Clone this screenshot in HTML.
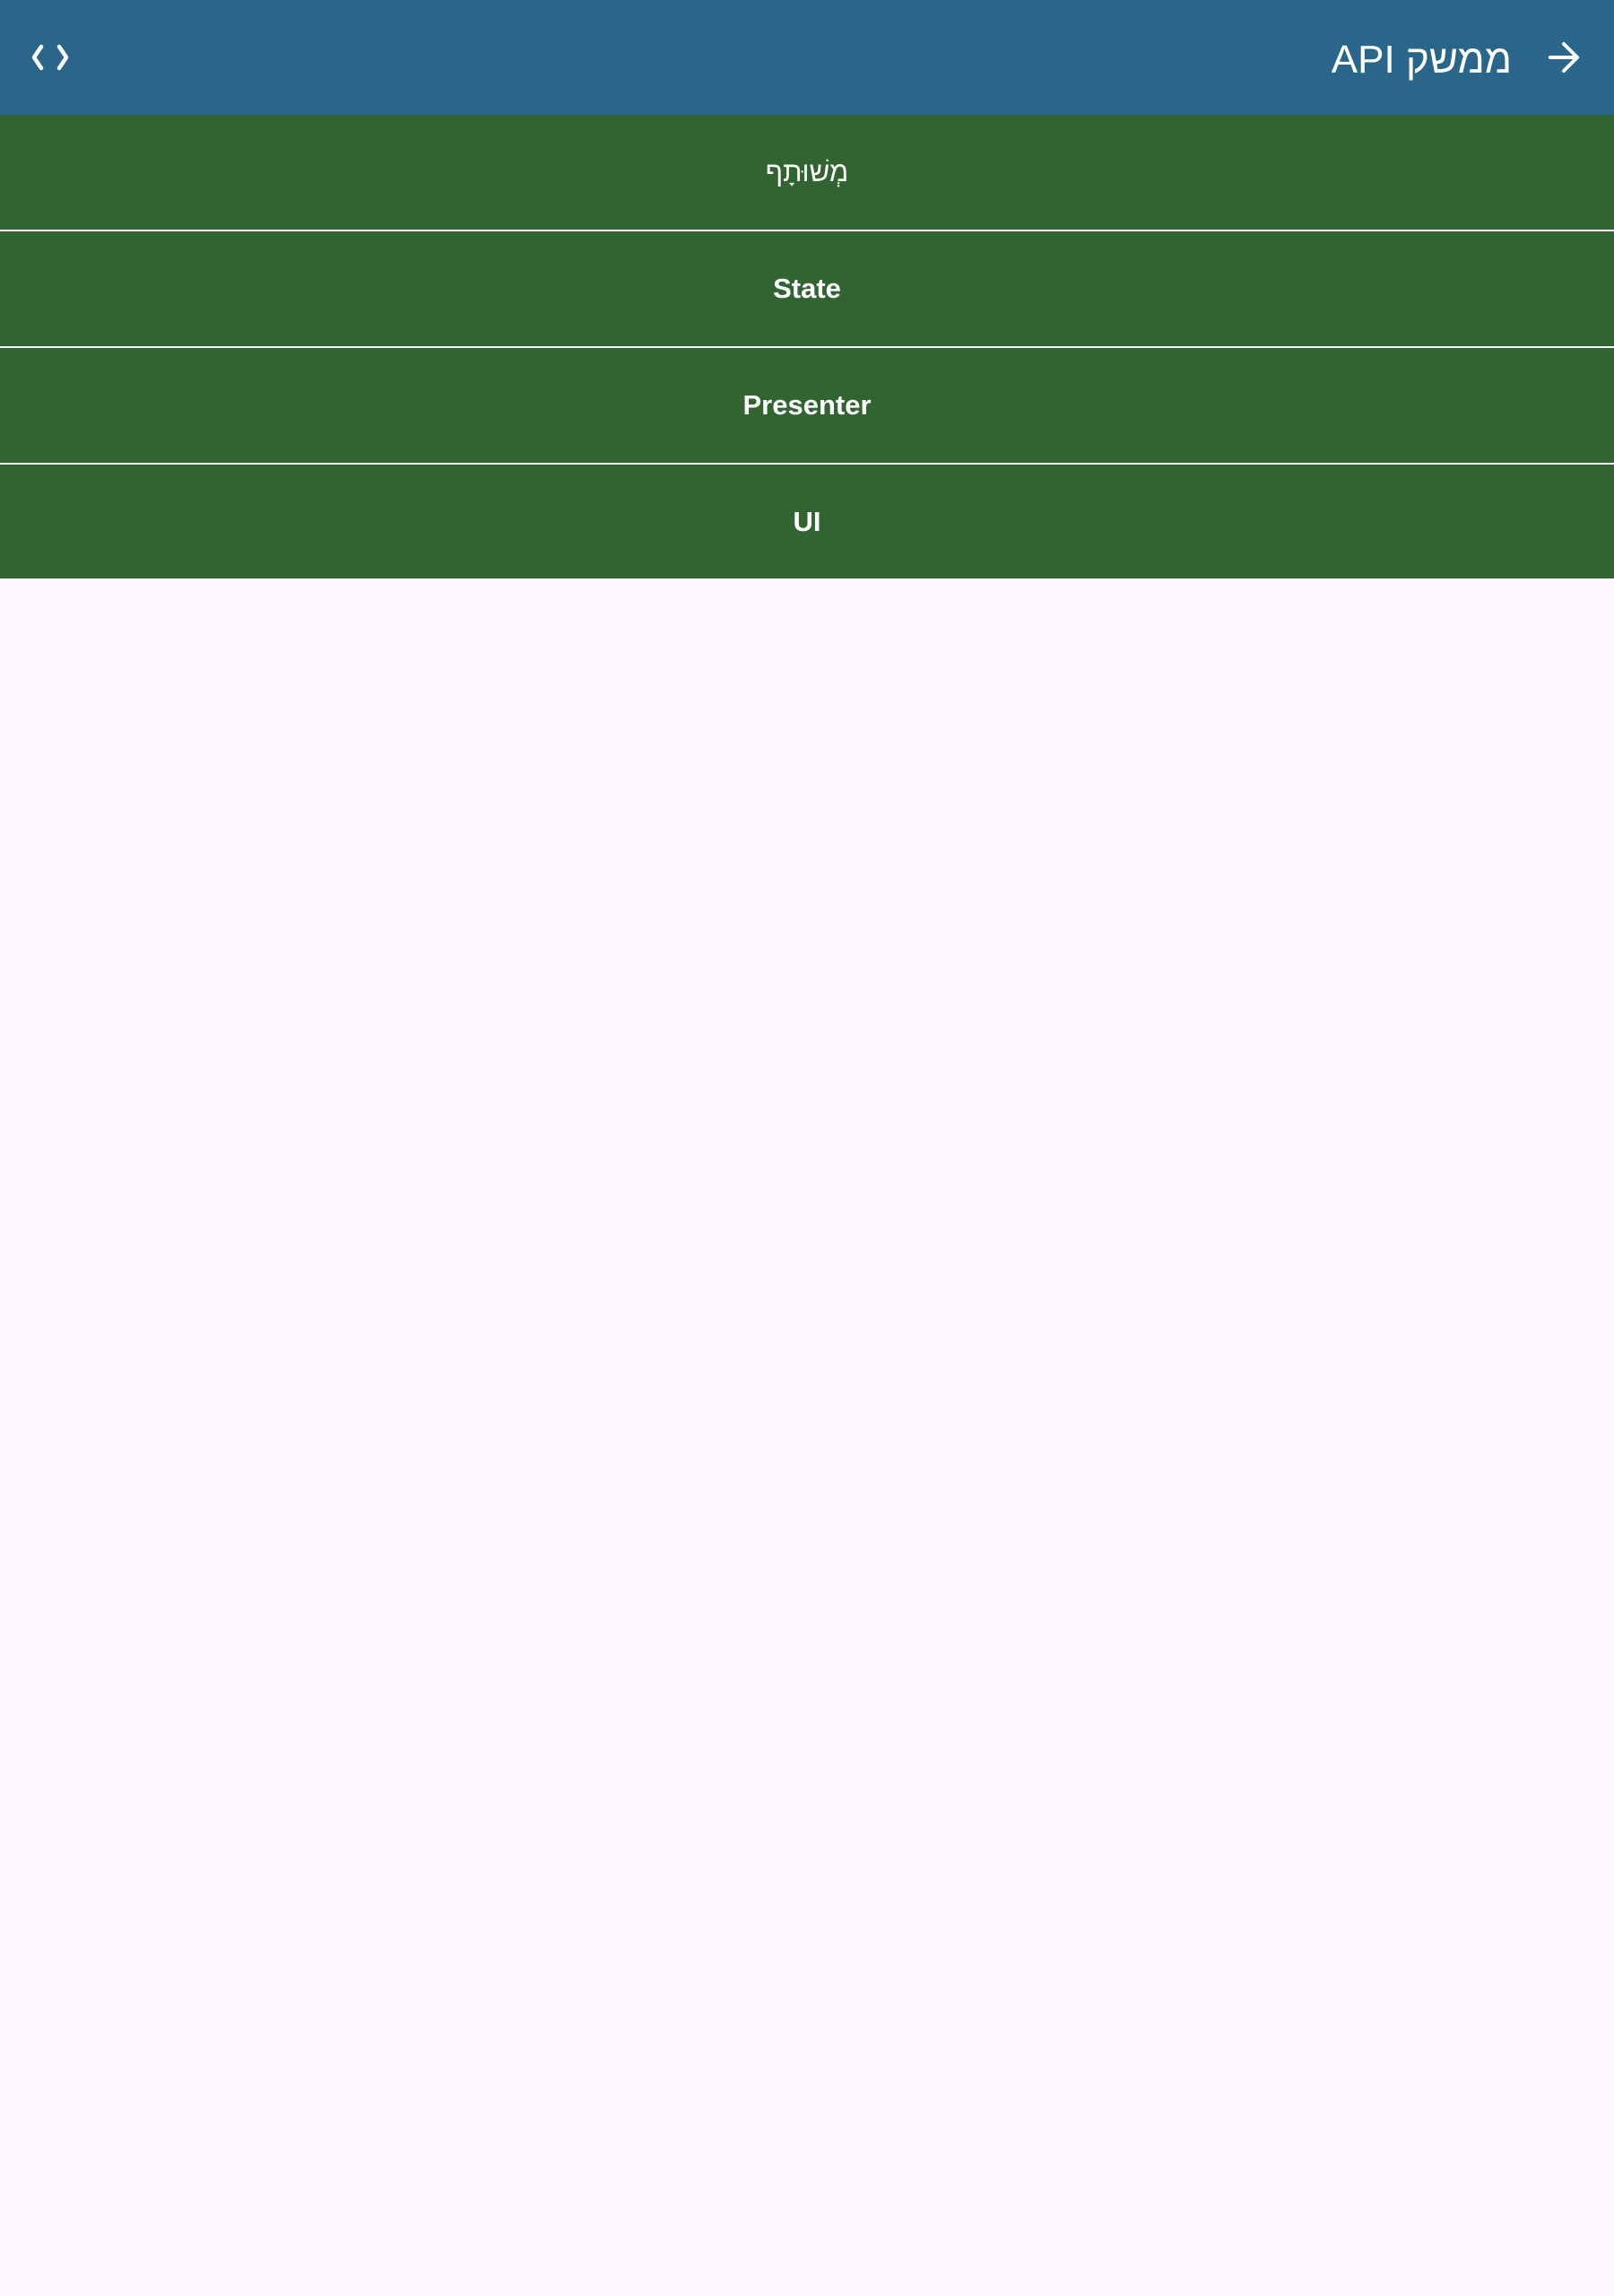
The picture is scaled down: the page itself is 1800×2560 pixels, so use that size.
<!DOCTYPE html>
<html><head><meta charset="utf-8"><style>
html,body{margin:0;padding:0;width:1800px;height:2560px;background:#fdf7fd;font-family:"Liberation Sans","Noto Sans CJK SC",sans-serif;overflow:hidden}
.bar{position:absolute;left:0;top:0;width:1800px;height:128px;background:#29668a}
.title{position:absolute;right:114px;top:32px;font-size:44px;color:#fff;line-height:70px;white-space:nowrap;direction:rtl}
.row{position:absolute;left:0;width:1800px;background:#326432;color:#fff;font-size:31px;font-weight:bold;text-align:center}
.div{position:absolute;left:0;width:1800px;height:2px;background:#fff}
</style></head><body>
<div class="bar">
<svg style="position:absolute;left:32px;top:46px" width="48" height="36" viewBox="0 0 48 36"><path d="M14 6 L6 18 L14 30 M34 6 L42 18 L34 30" stroke="#fff" stroke-width="4.5" fill="none" stroke-linecap="round" stroke-linejoin="round"/></svg>
<div class="title">ממשק API</div>
<svg style="position:absolute;left:1724px;top:44px" width="40" height="40" viewBox="0 0 40 40"><path d="M5 20 H34 M20 5 L35 20 L20 35" stroke="#fff" stroke-width="4" fill="none" stroke-linecap="round" stroke-linejoin="round"/></svg>
</div>
<div class="row" style="top:128px;height:128px;line-height:128px;font-weight:normal">מְשׁוּתָף</div>
<div class="div" style="top:256px"></div>
<div class="row" style="top:258px;height:128px;line-height:128px">State</div>
<div class="div" style="top:386px"></div>
<div class="row" style="top:388px;height:128px;line-height:128px">Presenter</div>
<div class="div" style="top:516px"></div>
<div class="row" style="top:518px;height:127px;line-height:127px">UI</div>
</body></html>
